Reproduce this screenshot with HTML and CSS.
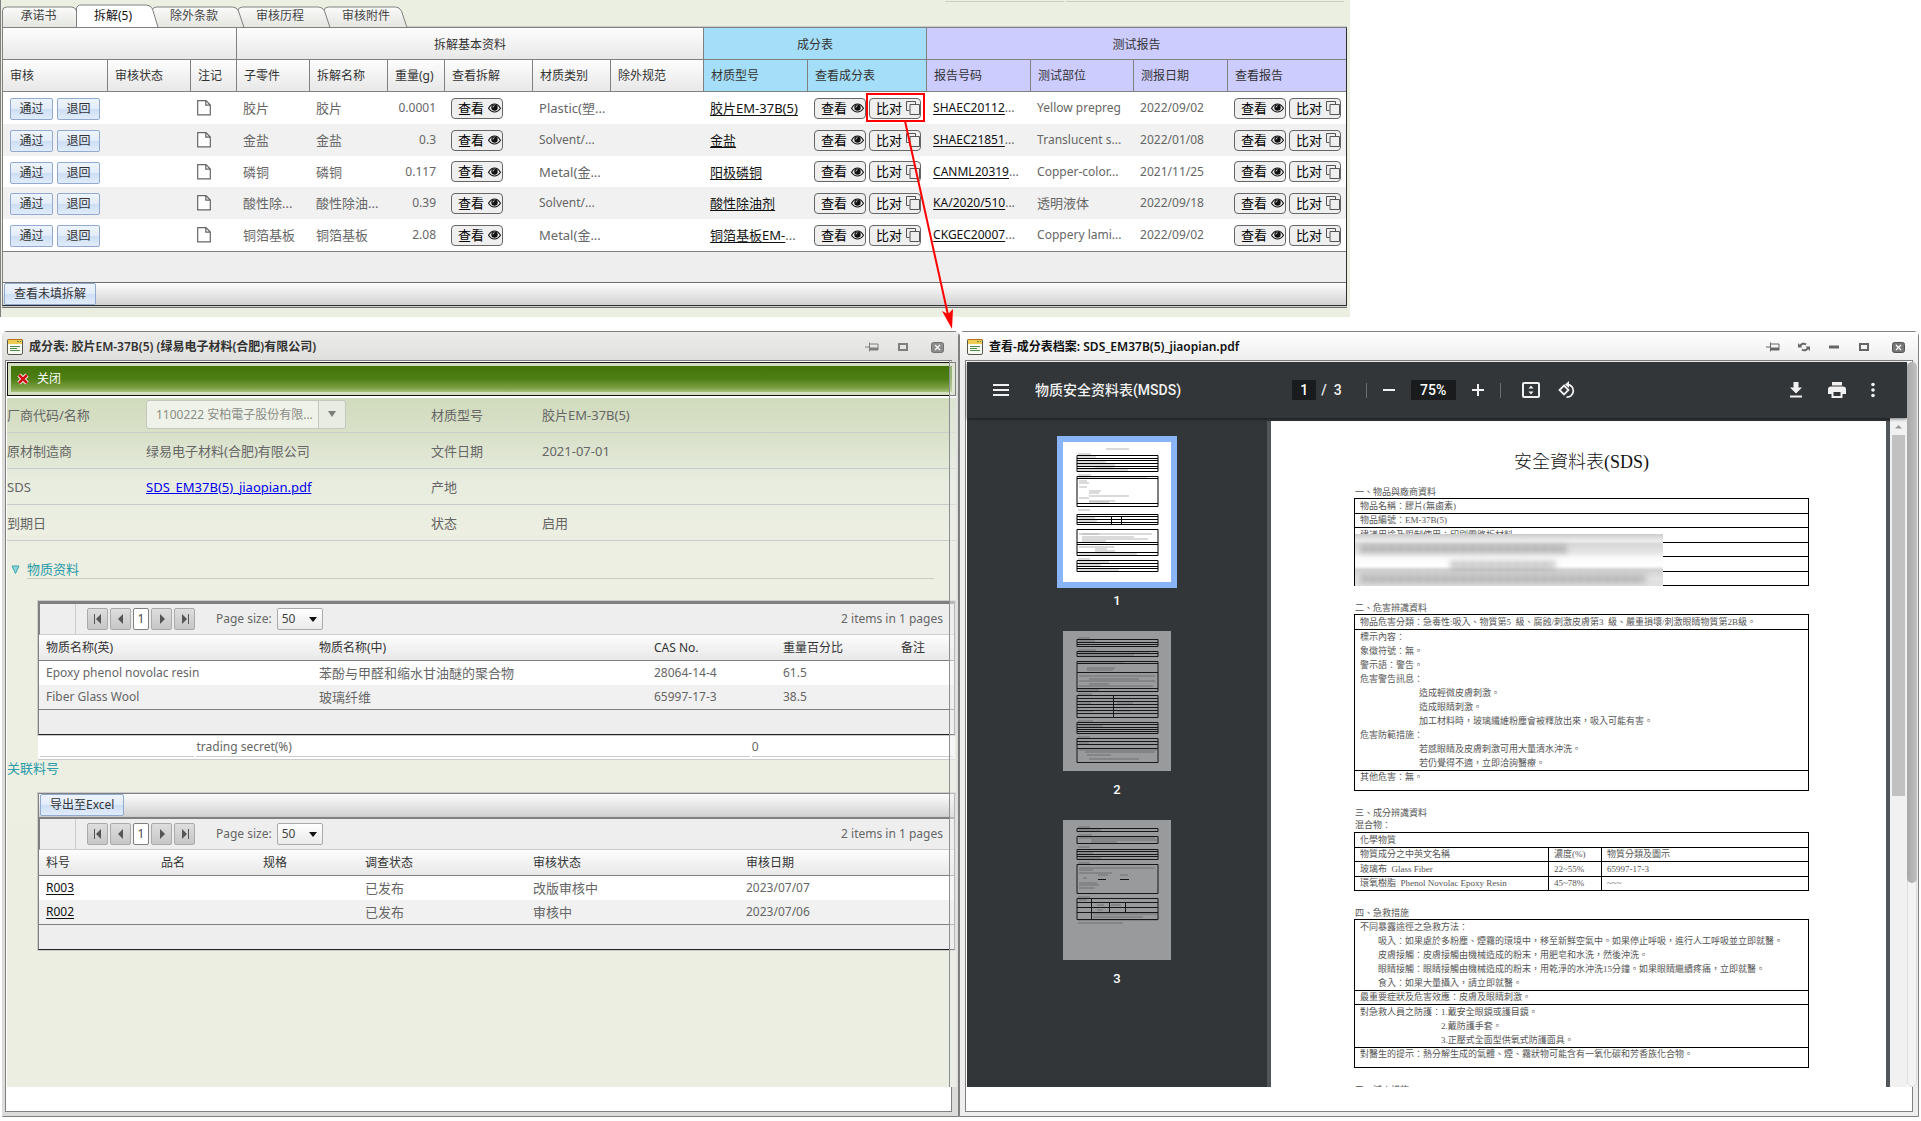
FILE: index.html
```html
<!DOCTYPE html>
<html lang="zh-CN">
<head>
<meta charset="utf-8">
<title>成分表审核</title>
<link rel="stylesheet" href="styles.css">
</head>
<body>
<svg class="defs" aria-hidden="true">
  <symbol id="i-eye" viewBox="0 0 13 10"><path d="M.5 5.2C2.5 2 4.300 1 6.500 1s4 1 6 4.200C10.500 8.200 8.700 9 6.500 9s-4-.8-6-3.800z" fill="none" stroke="#111" stroke-width="1.100"/><circle cx="6.500" cy="4.600" r="3.200" fill="#111"/><path d="M5 4.400A1.600 1.600 0 0 1 6.500 2.800" fill="none" stroke="#eee" stroke-width=".9"/></symbol>
  <symbol id="i-copy" viewBox="0 0 14 14"><path d="M9.500 3.500v-3h-9v9h3M4 3.500h9.500v10H4z" fill="none" stroke="#555"/></symbol>
  <symbol id="i-note" viewBox="0 0 14 16"><path d="M.7.7h8.300l4.300 4.300v9.800H.7zM8.800.9v4.300h4.300" fill="#fff" stroke="#666" stroke-width="1.200"/></symbol>
  <symbol id="i-app" viewBox="0 0 16 16"><rect x=".5" y=".5" width="15" height="15" rx="1.500" fill="#f6faf2" stroke="#55564d"/><path d="M1 1h14v4H1z" fill="#f0cb52"/><path d="M.5.5h15" stroke="#b86f1c"/><path d="M10 2.500h2M13 2.500h1M3 7.500h10M3 9.500h7M3 11.500h10" stroke="#4c8d45"/></symbol>
  <symbol id="i-pin" viewBox="0 0 14 10"><path d="M0 5h4M4.500.5v9M5 2h8v6H5" fill="none" stroke="#666"/><path d="M5 5.500h8V8H5z" fill="#666"/></symbol>
  <symbol id="i-max" viewBox="0 0 10 8"><rect x="1" y="1" width="8" height="6" fill="none" stroke="#666" stroke-width="2"/></symbol>
  <symbol id="i-min" viewBox="0 0 10 8"><path d="M0 4h10" stroke="#666" stroke-width="3"/></symbol>
  <symbol id="i-refresh" viewBox="0 0 12 10"><path d="M2 4.500C3 1.500 6 1 8 2.500M10 5.500C9 8.500 6 9 4 7.500" fill="none" stroke="#666" stroke-width="2"/><path d="M0 1v4.500h4.500zM12 9V4.500H7.500z" fill="#666"/></symbol>
  <symbol id="i-close" viewBox="0 0 13 11"><rect x=".5" y=".5" width="12" height="10" rx="2" fill="#777" stroke="#555"/><path d="M4 3l5 5M9 3L4 8" stroke="#fff" stroke-width="1.200"/></symbol>
  <symbol id="i-first" viewBox="0 0 8 10"><path d="M7 0v10L2 5z" fill="#555"/><path d="M.5 0v10" stroke="#555"/></symbol>
  <symbol id="i-prev" viewBox="0 0 8 10"><path d="M6 0v10L1 5z" fill="#555"/></symbol>
  <symbol id="i-next" viewBox="0 0 8 10"><path d="M2 0v10l5-5z" fill="#555"/></symbol>
  <symbol id="i-last" viewBox="0 0 8 10"><path d="M1 0v10l5-5z" fill="#555"/><path d="M7.500 0v10" stroke="#555"/></symbol>
</svg>

<section class="top">
  <div class="panel">
    <div class="rules"><i></i><i></i></div>
    <nav class="tabs">
      <svg class="tab-shapes" width="410" height="25" viewBox="0 0 410 25" aria-hidden="true">
        <defs><linearGradient id="tg" x1="0" y1="0" x2="0" y2="1"><stop offset="0" stop-color="#fbfbfb"/><stop offset="1" stop-color="#e2e4de"/></linearGradient></defs>
        <g fill="url(#tg)" stroke="#808080">
          <path d="M321.500 9q1-4 5-4h67q4 0 6 4l6 18H328z"/>
          <path d="M235.500 9q1-4 5-4h76q4 0 6 4l6 18H242z"/>
          <path d="M149.500 9q1-4 5-4h76q4 0 6 4l6 18H156z"/>
          <path d="M.5 27V9q0-4 4-4h65q4 0 5 4v18z"/>
          <path d="M74.500 27V7q0-4 5-4h65q4 0 6 4l6 20z" fill="#fff"/>
        </g>
      </svg>
      <a href="#" class="w1">承诺书</a><a href="#" class="w2 on">拆解(5)</a><a href="#" class="w3">除外条款</a><a href="#" class="w3">审核历程</a><a href="#" class="w3">审核附件</a>
    </nav>
    <div class="grid">
      <table class="parts">
        <colgroup><col class="c105"><col class="c83"><col class="c46"><col class="c73"><col class="c78"><col class="c57"><col class="c88"><col class="c78"><col class="c93"><col class="c104"><col class="c119"><col class="c104"><col class="c103"><col class="c94"><col class="c118"></colgroup>
        <thead>
          <tr class="group"><th colspan="3"></th><th colspan="6">拆解基本资料</th><th colspan="2" class="blue">成分表</th><th colspan="4" class="violet">测试报告</th></tr>
          <tr><th>审核</th><th>审核状态</th><th>注记</th><th>子零件</th><th>拆解名称</th><th>重量(g)</th><th>查看拆解</th><th>材质类别</th><th>除外规范</th><th class="blue">材质型号</th><th class="blue">查看成分表</th><th class="violet">报告号码</th><th class="violet">测试部位</th><th class="violet">测报日期</th><th class="violet">查看报告</th></tr>
        </thead>
        <tbody>
          <tr><td><div class="acts"><button class="blue-btn">通过</button><button class="blue-btn">退回</button></div></td><td></td><td><svg class="note"><use href="#i-note"/></svg></td><td>胶片</td><td>胶片</td><td class="num">0.0001</td><td><div class="btns"><button class="act">查看<svg class="eye"><use href="#i-eye"/></svg></button></div></td><td>Plastic(塑...</td><td></td><td><a href="#">胶片EM-37B(5)</a></td>
            <td class="over"><div class="btns"><button class="act">查看<svg class="eye"><use href="#i-eye"/></svg></button><span class="marked"><button class="act">比对<svg class="copy"><use href="#i-copy"/></svg></button><svg class="arrow" width="60" height="212" viewBox="0 0 60 212" aria-hidden="true"><path d="M4 0l43 194" stroke="#f00" stroke-width="2"/><path d="M51 208L41 190l6 3 5-5z" fill="#f00"/></svg></span></div></td>
            <td class="lat"><a href="#">SHAEC20112</a>...</td><td class="lat">Yellow prepreg</td><td class="lat">2022/09/02</td><td><div class="btns"><button class="act">查看<svg class="eye"><use href="#i-eye"/></svg></button><button class="act">比对<svg class="copy"><use href="#i-copy"/></svg></button></div></td></tr>
          <tr><td><div class="acts"><button class="blue-btn">通过</button><button class="blue-btn">退回</button></div></td><td></td><td><svg class="note"><use href="#i-note"/></svg></td><td>金盐</td><td>金盐</td><td class="num">0.3</td><td><div class="btns"><button class="act">查看<svg class="eye"><use href="#i-eye"/></svg></button></div></td><td class="lat">Solvent/...</td><td></td><td><a href="#">金盐</a></td>
            <td><div class="btns"><button class="act">查看<svg class="eye"><use href="#i-eye"/></svg></button><button class="act">比对<svg class="copy"><use href="#i-copy"/></svg></button></div></td>
            <td class="lat"><a href="#">SHAEC21851</a>...</td><td class="lat">Translucent s...</td><td class="lat">2022/01/08</td><td><div class="btns"><button class="act">查看<svg class="eye"><use href="#i-eye"/></svg></button><button class="act">比对<svg class="copy"><use href="#i-copy"/></svg></button></div></td></tr>
          <tr><td><div class="acts"><button class="blue-btn">通过</button><button class="blue-btn">退回</button></div></td><td></td><td><svg class="note"><use href="#i-note"/></svg></td><td>磷铜</td><td>磷铜</td><td class="num">0.117</td><td><div class="btns"><button class="act">查看<svg class="eye"><use href="#i-eye"/></svg></button></div></td><td>Metal(金...</td><td></td><td><a href="#">阳极磷铜</a></td>
            <td><div class="btns"><button class="act">查看<svg class="eye"><use href="#i-eye"/></svg></button><button class="act">比对<svg class="copy"><use href="#i-copy"/></svg></button></div></td>
            <td class="lat"><a href="#">CANML20319</a>...</td><td class="lat">Copper-color...</td><td class="lat">2021/11/25</td><td><div class="btns"><button class="act">查看<svg class="eye"><use href="#i-eye"/></svg></button><button class="act">比对<svg class="copy"><use href="#i-copy"/></svg></button></div></td></tr>
          <tr><td><div class="acts"><button class="blue-btn">通过</button><button class="blue-btn">退回</button></div></td><td></td><td><svg class="note"><use href="#i-note"/></svg></td><td>酸性除...</td><td>酸性除油...</td><td class="num">0.39</td><td><div class="btns"><button class="act">查看<svg class="eye"><use href="#i-eye"/></svg></button></div></td><td class="lat">Solvent/...</td><td></td><td><a href="#">酸性除油剂</a></td>
            <td><div class="btns"><button class="act">查看<svg class="eye"><use href="#i-eye"/></svg></button><button class="act">比对<svg class="copy"><use href="#i-copy"/></svg></button></div></td>
            <td class="lat"><a href="#">KA/2020/510</a>...</td><td>透明液体</td><td class="lat">2022/09/18</td><td><div class="btns"><button class="act">查看<svg class="eye"><use href="#i-eye"/></svg></button><button class="act">比对<svg class="copy"><use href="#i-copy"/></svg></button></div></td></tr>
          <tr><td><div class="acts"><button class="blue-btn">通过</button><button class="blue-btn">退回</button></div></td><td></td><td><svg class="note"><use href="#i-note"/></svg></td><td>铜箔基板</td><td>铜箔基板</td><td class="num">2.08</td><td><div class="btns"><button class="act">查看<svg class="eye"><use href="#i-eye"/></svg></button></div></td><td>Metal(金...</td><td></td><td><a href="#">铜箔基板EM-</a>...</td>
            <td><div class="btns"><button class="act">查看<svg class="eye"><use href="#i-eye"/></svg></button><button class="act">比对<svg class="copy"><use href="#i-copy"/></svg></button></div></td>
            <td class="lat"><a href="#">CKGEC20007</a>...</td><td class="lat">Coppery lami...</td><td class="lat">2022/09/02</td><td><div class="btns"><button class="act">查看<svg class="eye"><use href="#i-eye"/></svg></button><button class="act">比对<svg class="copy"><use href="#i-copy"/></svg></button></div></td></tr>
        </tbody>
      </table>
      <div class="foot"></div>
      <div class="bar"><button class="blue-btn">查看未填拆解</button></div>
    </div>
  </div>
</section>

<main class="windows">
  <section class="win win-a">
    <header class="title"><svg class="app"><use href="#i-app"/></svg><h2>成分表: 胶片EM-37B(5) (绿易电子材料(合肥)有限公司)</h2>
      <div class="ctl"><button aria-label="固定"><svg width="14" height="10"><use href="#i-pin"/></svg></button><button aria-label="最大化"><svg width="10" height="8"><use href="#i-max"/></svg></button><button aria-label="关闭窗口"><svg width="13" height="11"><use href="#i-close"/></svg></button></div>
    </header>
    <div class="frame">
      <div class="sheet">
        <div class="greenbar"><button><svg width="12" height="12" viewBox="0 0 12 12"><path d="M2 2l8 8M10 2l-8 8" stroke="#fff" stroke-width="4.500"/><path d="M2 2l8 8M10 2l-8 8" stroke="#d01010" stroke-width="2.500"/></svg>关闭</button></div>
        <div class="form">
          <label for="vendor">厂商代码/名称</label><span class="combo"><select id="vendor" disabled><option>1100222 安柏電子股份有限...</option></select></span><span>材质型号</span><span>胶片EM-37B(5)</span>
          <span>原材制造商</span><span>绿易电子材料(合肥)有限公司</span><span>文件日期</span><span>2021-07-01</span>
          <span>SDS</span><span><a href="#">SDS_EM37B(5)_jiaopian.pdf</a></span><span>产地</span><span></span>
          <span>到期日</span><span></span><span>状态</span><span>启用</span>
        </div>
        <h3 class="sect"><svg width="9" height="10" viewBox="0 0 9 10"><path d="M1 1h7L4.500 8.500z" fill="#8fd4dd" stroke="#3aa6b3"/></svg><span>物质资料</span></h3>
        <div class="box">
          <div class="pager"><i></i><button aria-label="首页"><svg><use href="#i-first"/></svg></button><button aria-label="上一页"><svg><use href="#i-prev"/></svg></button><button class="cur">1</button><button aria-label="下一页"><svg><use href="#i-next"/></svg></button><button aria-label="末页"><svg><use href="#i-last"/></svg></button><label for="ps1">Page size:</label><span class="size"><select id="ps1"><option>50</option></select></span><span class="total">2 items in 1 pages</span></div>
          <table class="list">
            <colgroup><col class="a1"><col class="a2"><col class="a3"><col class="a4"><col class="a5"></colgroup>
            <thead><tr><th>物质名称(英)</th><th>物质名称(中)</th><th>CAS No.</th><th>重量百分比</th><th>备注</th></tr></thead>
            <tbody><tr><td class="lat">Epoxy phenol novolac resin</td><td>苯酚与甲醛和缩水甘油醚的聚合物</td><td class="lat">28064-14-4</td><td class="lat">61.5</td><td></td></tr>
            <tr><td class="lat">Fiber Glass Wool</td><td>玻璃纤维</td><td class="lat">65997-17-3</td><td class="lat">38.5</td><td></td></tr></tbody>
          </table>
          <div class="lfoot"></div>
        </div>
        <div class="secret"><span></span><span>trading secret(%)</span><span>0</span></div>
        <h3 class="rel">关联料号</h3>
        <div class="box thin">
          <div class="bar"><button class="blue-btn">导出至Excel</button></div>
          <div class="pager line"><i></i><button aria-label="首页"><svg><use href="#i-first"/></svg></button><button aria-label="上一页"><svg><use href="#i-prev"/></svg></button><button class="cur">1</button><button aria-label="下一页"><svg><use href="#i-next"/></svg></button><button aria-label="末页"><svg><use href="#i-last"/></svg></button><label for="ps2">Page size:</label><span class="size"><select id="ps2"><option>50</option></select></span><span class="total">2 items in 1 pages</span></div>
          <table class="list">
            <colgroup><col class="b1"><col class="b2"><col class="b2"><col class="b3"><col class="b4"><col class="b5"></colgroup>
            <thead><tr><th>料号</th><th>品名</th><th>规格</th><th>调查状态</th><th>审核状态</th><th>审核日期</th></tr></thead>
            <tbody><tr><td class="lat"><a href="#">R003</a></td><td></td><td></td><td>已发布</td><td>改版审核中</td><td class="lat">2023/07/07</td></tr>
            <tr><td class="lat"><a href="#">R002</a></td><td></td><td></td><td>已发布</td><td>审核中</td><td class="lat">2023/07/06</td></tr></tbody>
          </table>
          <div class="lfoot"></div>
        </div>
      </div>
    </div>
  </section>

  <section class="win win-b">
    <header class="title"><svg class="app"><use href="#i-app"/></svg><h2>查看-成分表档案: SDS_EM37B(5)_jiaopian.pdf</h2>
      <div class="ctl"><button aria-label="固定"><svg width="14" height="10"><use href="#i-pin"/></svg></button><button aria-label="刷新"><svg width="12" height="10"><use href="#i-refresh"/></svg></button><button aria-label="最小化"><svg width="10" height="8"><use href="#i-min"/></svg></button><button aria-label="最大化"><svg width="10" height="8"><use href="#i-max"/></svg></button><button aria-label="关闭窗口"><svg width="13" height="11"><use href="#i-close"/></svg></button></div>
    </header>
    <div class="frame">
      <div class="viewer">
        <div class="pdfbar">
          <div class="left"><button aria-label="菜单"><svg width="16" height="12" viewBox="0 0 16 12"><path d="M0 1h16M0 6h16M0 11h16" stroke="#f1f1f1" stroke-width="2"/></svg></button><span>物质安全资料表(MSDS)</span></div>
          <div class="mid"><input type="text" value="1" aria-label="页码" class="pg"><span class="of">/&nbsp;&nbsp;3</span><i></i>
            <button aria-label="缩小"><svg width="12" height="12" viewBox="0 0 12 12"><path d="M0 6h12" stroke="#f1f1f1" stroke-width="2"/></svg></button><input type="text" value="75%" aria-label="缩放" class="zm"><button aria-label="放大"><svg width="12" height="12" viewBox="0 0 12 12"><path d="M0 6h12M6 0v12" stroke="#f1f1f1" stroke-width="2"/></svg></button><i class="near"></i>
            <button aria-label="适合页面" class="fit"><svg width="18" height="16" viewBox="0 0 18 16"><rect x="1" y="1" width="16" height="14" rx="1" fill="none" stroke="#f1f1f1" stroke-width="2"/><path d="M6.500 6.500h5L9 3.500zM6.500 9.500h5L9 12.500z" fill="#f1f1f1"/></svg></button>
            <button aria-label="旋转"><svg width="18" height="18" viewBox="0 0 18 18"><path d="M6 4.500L10.500 9 6 13.500 1.500 9z" fill="none" stroke="#f1f1f1" stroke-width="1.800"/><path d="M9.500 3.500a6.300 6.300 0 1 1-1 12.600" fill="none" stroke="#f1f1f1" stroke-width="1.800"/><path d="M11 0v7L7 3.500z" fill="#f1f1f1"/></svg></button></div>
          <div class="right"><button aria-label="下载"><svg width="14" height="16" viewBox="0 0 14 16"><path d="M4.500 0h5v5.500H13l-6 6-6-6h3.500zM1 13.500h12v2H1z" fill="#f1f1f1"/></svg></button><button aria-label="打印"><svg width="18" height="16" viewBox="0 0 18 16"><path d="M4 0h10v3.500H4zM3 4.500h12q3 0 3 3V12h-3.500v4h-11v-4H0V7.500q0-3 3-3zM5.500 10v4h7v-4z" fill="#f1f1f1" fill-rule="evenodd"/></svg></button><button aria-label="更多"><svg width="4" height="16" viewBox="0 0 4 16"><g fill="#f1f1f1"><circle cx="2" cy="2.500" r="1.800"/><circle cx="2" cy="8" r="1.800"/><circle cx="2" cy="13.500" r="1.800"/></g></svg></button></div>
        </div>
        <div class="pdfbody">
          <aside class="thumbs">
            <figure class="sel"><svg width="108" height="140" viewBox="0 0 108 140"><path fill="#fff" d="M0 0h108v140H0z"/><path d="M43 7h23M15 12h13M15 15h18M15 20h28M15 23h37M31 25h20M15 28h50M15 33h13M16 35h68M16 39h8M16 41h10M16 45h8M26 49h12M26 51h10M26 54h40M16 56h10M26 59h26M26 60h20M15 68h12M16 76h16M16 79h18M16 92h20M19 92h70M19 95h52M19 97h66M19 99h24M16 105h35M32 107h12M32 109h20M16 112h58M15 117h12M16 120h30M16 123h22M16 128h40" stroke="#b5b5b5" stroke-width="1"/><path d="M14 13.500h81v16H14zM14 16.500h81M14 18.500h81M14 21.500h81M14 24.500h81M14 26.500h81M14 34.500h81v30H14zM14 36.500h81M14 61.500h81M14 72.500h81v10H14zM14 74.500h81M14 77.500h81M14 80.500h81M48.500 75v8M58.500 75v8M14 87.500h81v26H14zM14 100.500h81M14 102.500h81M14 110.500h81M14 118.500h81v11H14zM14 121.500h81M14 124.500h81M14 126.500h81" fill="none" stroke="#000"/></svg><figcaption>1</figcaption></figure>
            <figure><svg width="108" height="140" viewBox="0 0 108 140"><path fill="#999a9c" d="M0 0h108v140H0z"/><path d="M15 7h12M16 10h16M15 19h18M16 21h70M16 24h55M16 31h45M24 37h28M24 39h26M16 45h76M26 48h50M16 50h76M26 53h20M16 55h74M16 59h20M15 63h14M16 72h12M54 72h16M16 80h14M54 80h14M15 90h15M16 95h24M15 106h12M16 112h10M16 119h78M22 121h70M24 124h24M26 128h50" stroke="#707173"/><path d="M14 8.500h81v7H14zM14 11.500h81M14 13.500h81M14 20.500h81v5H14zM14 22.500h81M14 30.500h81v30H14zM14 32.500h81M14 41.500h81M14 57.500h81M14 64.500h81v22H14zM14 67.500h81M14 70.500h81M14 73.500h81M14 76.500h81M14 79.500h81M14 82.500h81M50.500 64v22M14 91.500h81v11H14zM14 93.500h81M14 96.500h81M14 98.500h81M14 100.500h81M14 107.500h81v24H14zM14 110.500h81M14 113.500h81M14 117.500h81" fill="none" stroke="#151617"/></svg><figcaption>2</figcaption></figure>
            <figure><svg width="108" height="140" viewBox="0 0 108 140"><path fill="#999a9c" d="M0 0h108v140H0z"/><path d="M15 7h12M16 10h22M15 15h14M16 18h76M28 20h66M28 22h26M15 27h12M16 33h14M16 38h22M15 43h12M16 48h76M16 50h14M16 53h33M35 55h10M57 55h8M20 58h4M16 63h18M16 65h20M16 68h16M15 77h12M16 80h8M34 85h7M48 85h10M34 90h6M30 94h64M30 97h50M15 100h80M15 103h45" stroke="#707173"/><path d="M14 8.500h81v3H14zM14 16.500h81v7H14zM14 29.500h81v10H14zM14 31.500h81M14 34.500h81M14 36.500h81M14 44.500h81v29H14zM14 78.500h81v21H14zM14 82.500h81M14 87.500h81M14 92.500h81M28.500 79v20M46.500 83v10M62.500 83v10M35 59.500h8M57 59.500h9" fill="none" stroke="#151617"/></svg><figcaption>3</figcaption></figure>
          </aside>
          <article class="doc" lang="zh-TW">
            <h1>安全資料表(SDS)</h1>
            <h4>一、物品與廠商資料</h4>
            <div class="hide-wrap">
            <table><tr><td>物品名稱：膠片(無鹵素)</td></tr><tr><td>物品編號：EM-37B(5)</td></tr><tr><td>建議用途及限制使用：印刷電路板材料</td></tr><tr><td></td></tr><tr><td></td></tr><tr><td></td></tr></table>
            <div class="mask"><svg viewBox="0 0 308 52" width="308" height="52" aria-hidden="true"><g fill="none" stroke="#777" stroke-width="7" stroke-dasharray="7 2"><path d="M6 15h206M96 31h104M6 45h284"/></g></svg></div>
            </div>
            <h4>二、危害辨識資料</h4>
            <table><tr><td>物品危害分類：急毒性:吸入、物質第5&nbsp; 級、腐蝕/刺激皮膚第3&nbsp; 級、嚴重損壞/刺激眼睛物質第2B級。</td></tr>
            <tr><td><p>標示內容：</p><p>象徵符號：無。</p><p>警示語：警告。</p><p>危害警告訊息：</p><p class="in3">造成輕微皮膚刺激。</p><p class="in3">造成眼睛刺激。</p><p class="in3">加工材料時，玻璃纖維粉塵會被釋放出來，吸入可能有害。</p><p>危害防範措施：</p><p class="in3">若感眼睛及皮膚刺激可用大量清水沖洗。</p><p class="in3">若仍覺得不適，立即洽詢醫療。</p></td></tr>
            <tr class="tall"><td>其他危害：無。</td></tr></table>
            <h4>三、成分辨識資料</h4>
            <p class="mix">混合物：</p>
            <table><colgroup><col class="d1"><col class="d2"><col></colgroup><tr><td colspan="3">化學物質</td></tr><tr><td>物質成分之中英文名稱</td><td>濃度(%)</td><td>物質分類及圖示</td></tr><tr><td>玻璃布&nbsp; Glass Fiber</td><td>22~55%</td><td>65997-17-3</td></tr><tr><td>環氧樹脂&nbsp; Phenol Novolac Epoxy Resin</td><td>45~78%</td><td>~~~</td></tr></table>
            <h4>四、急救措施</h4>
            <table><tr><td><p>不同暴露途徑之急救方法：</p><p class="in1">吸入：如果處於多粉塵、煙霧的環境中，移至新鮮空氣中。如果停止呼吸，進行人工呼吸並立即就醫。</p><p class="in1">皮膚接觸：皮膚接觸由機械造成的粉末，用肥皂和水洗，然後沖洗。</p><p class="in1">眼睛接觸：眼睛接觸由機械造成的粉末，用乾淨的水沖洗15分鐘。如果眼睛繼續疼痛，立即就醫。</p><p class="in1">食入：如果大量攝入，請立即就醫。</p></td></tr>
            <tr><td>最重要症狀及危害效應：皮膚及眼睛刺激。</td></tr>
            <tr><td><p>對急救人員之防護：1.戴安全眼鏡或護目鏡。</p><p class="in4">2.戴防護手套。</p><p class="in4">3.正壓式全面型供氧式防護面具。</p></td></tr>
            <tr class="tall"><td>對醫生的提示：熱分解生成的氣體、煙、霧狀物可能含有一氧化碳和芳香族化合物。</td></tr></table>
            <h4>五、滅火措施</h4>
          </article>
          <div class="vscroll"><svg width="17" height="17" viewBox="0 0 17 17"><path d="M5 10.500h7L8.500 7z" fill="#999"/></svg><i></i></div>
        </div>
      </div>
      <div class="oscroll"><i></i></div>
    </div>
  </section>
</main>
</body>
</html>
```
FILE: styles.css
```css
* { box-sizing: border-box; }
body {
  margin: 0;
  height: 100vh;
  display: flex;
  flex-direction: column;
  background: #fff;
  color: #666;
  font: 13px/18px "Noto Sans", "Noto Sans CJK SC", sans-serif;
  overflow: hidden;
}
h1, h2, h3, h4, p, figure { margin: 0; font-weight: inherit; }
button, select, input { font: inherit; margin: 0; padding: 0; }
button { cursor: pointer; }
.defs { position: absolute; width: 0; height: 0; }

/* upper panel */
.top { display: grid; grid-template-columns: 1350fr 571fr; }
.panel { background: #ebefe1; border-left: 1px solid #808080; padding: 1px 3px 11px 1px; }
.rules { display: flex; gap: 2px; justify-content: flex-end; padding-right: 3px; }
.rules i { height: 1px; background: #cbcdc6; width: 119px; }
.rules i + i { width: 278px; }
.tabs { position: relative; display: flex; height: 25px; padding-top: 2px; border-bottom: 1px solid #ccc; }
.tab-shapes { position: absolute; left: 0; top: 0; }
.tabs a { position: relative; font-size: 12px; line-height: 24px; height: 22px; color: #444; text-decoration: none; text-align: center; white-space: nowrap; }
.tabs a.on { color: #111; }
.w1 { width: 73px; }
.w2 { width: 76px; }
.w3 { width: 86px; }
.grid { border: 1px solid #808080; border-color: #808080 #303030 #303030 #808080; box-shadow: 0 1px #ccc, 0 2px #707070; }
.parts { width: 100%; table-layout: fixed; border-collapse: separate; border-spacing: 0; border-bottom: 1px solid #808080; }
.c46 { width: 46px; } .c57 { width: 57px; } .c73 { width: 73px; } .c78 { width: 78px; }
.c83 { width: 83px; } .c88 { width: 88px; } .c93 { width: 93px; } .c94 { width: 94px; }
.c103 { width: 103px; } .c104 { width: 104px; } .c105 { width: 105px; } .c118 { width: 118px; } .c119 { width: 119px; }
.parts th {
  height: 32px; padding: 0 0 0 7px; text-align: left; font-size: 12px; font-weight: 400; color: #333; white-space: nowrap;
  background: linear-gradient(#fdfdfd, #e8e8e8); border-right: 1px solid #808080; border-bottom: 1px solid #808080;
}
.parts th:last-child { border-right: 0; }
.parts .group th { text-align: center; padding: 2px 0 0; }
.parts th.blue { background: #a4def8; }
.parts th.violet { background: #ccccff; }
.parts td { height: 32px; padding: 0 0 0 6px; white-space: nowrap; overflow: hidden; }
.parts td.over { overflow: visible; }
.parts tbody tr:nth-child(even) { background: #f1f1f1; }
.parts tbody tr { background: #fff; }
.parts tbody tr:nth-child(3) td { height: 31px; }
.parts td.num { text-align: right; padding-right: 9px; font-size: 12px; }
.parts td.lat, .list td.lat { font-size: 12px; }
.parts a, .list a { color: #111; text-underline-offset: 2px; }
.acts { display: flex; gap: 4px; padding: 2px 0 0 1px; }
.blue-btn {
  height: 22px; padding: 0 9px; border: 1px solid #92aad0; border-radius: 2px; color: #333; font-size: 12px; line-height: 20px; white-space: nowrap;
  background: linear-gradient(#edf4fd, #e2ecfa 50%, #cddef4 50%, #e0ecfb);
}
.acts .blue-btn { width: 43px; padding: 0; }
.note { display: block; width: 14px; height: 16px; }
.btns { display: flex; gap: 3px; }
.act {
  width: 52px; height: 21px; display: flex; align-items: center; justify-content: space-between; padding: 0 0 0 6px;
  border: 1px solid #666; border-radius: 4px; background: #efefef; color: #000; line-height: 19px; white-space: nowrap;
}
.eye { width: 13px; height: 10px; margin-right: 1px; }
.copy { width: 14px; height: 14px; }
.marked { position: relative; }
.marked::before { content: ""; position: absolute; inset: -5px -4px -3px -3px; border: 2px solid #f00; }
.arrow { position: absolute; left: 32px; top: 23px; z-index: 5; pointer-events: none; }
.foot { height: 30px; background: #eee; }
.bar { display: flex; background: linear-gradient(#fdfdfd, #d2d2d2); padding-left: 1px; }
.grid .bar { border-top: 1px solid #707070; }

/* floating windows */
.windows { flex: 1; min-height: 0; display: grid; grid-template-columns: 957fr 960fr; padding: 14px 2px 4px 2px; }
.win { min-width: 0; min-height: 0; display: flex; flex-direction: column; border: 1px solid #808080; border-radius: 5px 5px 0 0; background: #eee; }
.win-a { border-left-color: #ddd; background: #dcdddb; padding: 0 6px 4px 2px; }
.win-b { padding: 0 5px 4px; }
.title { display: flex; align-items: center; gap: 6px; height: 28px; padding: 2px 8px 0 2px; }
.win-a .title { background: linear-gradient(#ececea, #dfe0dd); margin: 0 -6px 0 -2px; padding: 2px 14px 0 4px; }
.win-b .title { background: linear-gradient(#fff, #eee); margin: 0 -5px; padding: 2px 13px 0 7px; }
.title h2 { flex: 1; font-size: 12px; font-weight: 600; color: #333; white-space: nowrap; }
.win-b .title h2 { color: #111; }
.app { width: 16px; height: 16px; }
.ctl { display: flex; align-items: center; gap: 18px; }
.ctl button { border: 0; background: none; display: flex; justify-content: center; min-width: 12px; }
.ctl button:last-child { margin-left: 4px; }
.win-a .ctl { opacity: .8; }
.frame { flex: 1; min-height: 0; position: relative; display: flex; flex-direction: column; border: 1px solid #808080; background: #fff; padding: 1px 0 24px 1px; }
.win-a .frame::after { content: ""; position: absolute; top: 0; bottom: 24px; right: -6px; width: 7px; border-left: 1px solid #8a8f90; background: rgba(235, 238, 235, .5); }

/* composition sheet */
.sheet { flex: 1; min-height: 0; margin-right: -5px; background: linear-gradient(#d1dbbd 36px, #dbe2cc 80px, #e8eddf 120px, #edefe2 190px, #ebeee1 100%); }
.greenbar { border: 1px solid #111; padding: 3px; height: 34px; background: #d3dec0; box-shadow: 0 2px #fff; }
.greenbar button { width: 100%; height: 26px; border: 0; padding-left: 6px; display: flex; align-items: center; gap: 8px; color: #fff; font-size: 12px; background: linear-gradient(#43740a, #4d7f14 50%, #7da046 85%, #a8c37c); }
.form { display: grid; grid-template-columns: 139px 285px 111px 1fr; margin-top: 1px; }
.form > * { height: 36px; display: flex; align-items: center; border-bottom: 1px solid #c9cbca; white-space: nowrap; }
.form a { color: #00e; }
.combo { position: relative; }
.combo select { width: 200px; height: 29px; appearance: none; border: 1px solid #c3c7bd; border-radius: 3px; padding-left: 9px; background: linear-gradient(90deg, #eff2e8 171px, #c3c7bd 171px, #c3c7bd 172px, #e9ece3 172px); color: #8a8d86; font-size: 12px; opacity: 1; }
.combo::after { content: ""; position: absolute; left: 182px; top: 14px; border: 4px solid transparent; border-top: 6px solid #7c7f79; border-bottom: 0; }
.sect { display: flex; align-items: center; gap: 7px; padding: 19px 22px 0 4px; font-size: 13px; color: #2a9ba8; }
.sect span { flex: 1; line-height: 18px; border-bottom: 1px solid #c8cbc6; }
.box { margin: 22px 1px 0 31px; border: 1px solid #808080; border-top-width: 3px; border-bottom-color: #222; background: #eee; box-shadow: 0 0 0 1px #ccc; }
.thin { margin-top: 17px; border-top-width: 1px; }
.pager { display: flex; align-items: center; gap: 2px; height: 31px; padding-right: 11px; background: #eee; border-bottom: 1px solid #ccc; border-left: 1px solid #808080; font-size: 12px; }
.pager.line { border-top: 2px solid #808080; height: 33px; }
.pager i { width: 36px; align-self: stretch; border-right: 1px solid #ccc; margin-right: 9px; }
.pager button { width: 21px; height: 22px; display: flex; align-items: center; justify-content: center; border: 1px solid #aaa; border-radius: 2px; background: linear-gradient(#dedede, #c6c6c6); color: #444; }
.pager button svg { width: 8px; height: 10px; }
.pager .cur { width: 16px; background: #fff; border-color: #808080; }
.pager label { margin: 0 3px 0 19px; }
.size { position: relative; display: flex; }
.size select { width: 46px; height: 22px; appearance: none; border: 1px solid #aaa; border-radius: 2px; padding-left: 4px; background: linear-gradient(#fff, #eaeaea); color: #444; font-size: 12px; }
.size::after { content: ""; position: absolute; right: 6px; top: 9px; border: 4px solid transparent; border-top: 5px solid #111; border-bottom: 0; }
.total { margin-left: auto; }
.list { width: 100%; table-layout: fixed; border-collapse: separate; border-spacing: 0; }
.list th, .list td { padding: 0 0 0 7px; text-align: left; white-space: nowrap; font-weight: 400; }
.list th { height: 26px; padding-top: 1px; font-size: 12px; color: #333; background: linear-gradient(#fdfdfd, #e8e8e8); border-bottom: 1px solid #808080; }
.list td { height: 24px; background: #fff; }
.list tr:nth-child(even) td { background: #f1f1f1; }
.a1 { width: 273px; } .a2 { width: 335px; } .a3 { width: 129px; } .a4 { width: 118px; } .a5 { width: 60px; }
.b1 { width: 115px; } .b2 { width: 102px; } .b3 { width: 168px; } .b4 { width: 213px; } .b5 { width: 215px; }
.lfoot { height: 25px; border-top: 1px solid #808080; }
.secret { display: grid; grid-template-columns: 155fr 555fr 202fr; gap: 2px; margin: 1px 1px 0 31px; padding: 1px 2px 2px; background: #fff; border-bottom: 1px solid #ccc; font-size: 12px; }
.secret span { line-height: 19px; border-bottom: 1px solid #ccc; }
.rel { font-size: 13px; line-height: 16px; color: #2a9ba8; }
.box .bar { border-bottom: 1px solid #ccc; }

/* PDF viewer */
.viewer { flex: 1; min-height: 0; margin-right: 5px; display: flex; flex-direction: column; background: #323639; }
.pdfbar { position: relative; display: grid; grid-template-columns: 1fr auto 1fr; align-items: center; height: 56px; padding: 0 32px 0 26px; color: #f1f1f1; background: #323639; box-shadow: 0 1px 3px rgba(0, 0, 0, .5); font: 500 14px/20px Roboto, "Noto Sans CJK SC", sans-serif; }
.pdfbar > div { display: flex; align-items: center; white-space: nowrap; }
.pdfbar button { border: 0; background: none; display: flex; }
.pdfbar input { border: 0; background: #191b1c; color: #fff; height: 20px; text-align: center; }
.pdfbar .left { gap: 26px; }
.pdfbar .pg { width: 24px; }
.pdfbar .zm { width: 45px; margin: 0 16px; }
.of { margin-left: 5px; }
.mid i { width: 1px; height: 15px; background: #6b6e70; margin: 0 16px 0 24px; }
.mid .near { margin-left: 16px; }
.mid .fit { margin: 0 18px 0 5px; }
.pdfbar .right { justify-content: flex-end; gap: 25px; }
.pdfbody { flex: 1; min-height: 0; display: flex; overflow: hidden; }
.thumbs { width: 300px; flex: none; display: flex; flex-direction: column; align-items: center; gap: 20px; padding-top: 24px; }
.thumbs figure { display: flex; flex-direction: column; align-items: center; gap: 9px; color: #fff; font: 500 13px/20px Roboto, sans-serif; }
.thumbs svg { display: block; }
.thumbs .sel { gap: 3px; margin-top: -6px; }
.thumbs .sel svg { box-sizing: content-box; border: 6px solid #8ab4f8; }
.doc { flex: 1; min-width: 0; margin-top: 3px; border: solid #525659; border-width: 0 4px; background: #fff; padding: 0 77px 0 83px; color: #555; font: 9px/14px "Liberation Serif", "Noto Sans CJK TC", serif; white-space: nowrap; }
.doc h1 { font-size: 18px; line-height: 26px; text-align: center; padding: 28px 0 11px; color: #111; font-weight: 300; }
.doc h4 { font-size: 9px; line-height: 12px; padding: 16px 0 0 1px; }
.doc h1 + h4 { padding-top: 0; }
.mix { padding-left: 1px; line-height: 13px; }
.doc table { width: 100%; table-layout: fixed; border-collapse: collapse; font: inherit; color: inherit; }
.doc td { border: 1px solid #000; padding: 0 0 0 5px; line-height: 13px; height: 14px; overflow: hidden; }
.doc tr:nth-child(odd) td { height: 15px; }
.doc td p { line-height: 14px; }
.doc .tall td, .doc .tall:nth-child(odd) td { height: 20px; vertical-align: top; }
.d1 { width: 194px; } .d2 { width: 53px; }
.in1 { padding-left: 18px; } .in3 { padding-left: 59px; } .in4 { padding-left: 81px; }
.hide-wrap { position: relative; }
.mask { position: absolute; left: 1px; bottom: 0; width: 308px; height: 52px; overflow: hidden; background: linear-gradient(#ccc, #eee 7px, #d8d8d8 10px, #e4e4e4 18px, #fafafa 24px, #fff 32px, #d0d0d0 36px, #e2e2e2 44px, #e0e0e0); }
.mask svg { display: block; filter: blur(3px); opacity: .6; }
.vscroll { width: 17px; background: #f1f1f1; display: flex; flex-direction: column; align-items: center; }
.vscroll i { width: 13px; height: 54%; background: #c1c1c1; }
.oscroll { position: absolute; top: 1px; right: -5px; bottom: 24px; width: 10px; border-radius: 5px; background: #f3f3f3; border: 1px solid #ddd; }
.oscroll i { display: block; margin: -1px; height: 72%; border-radius: 5px; background: linear-gradient(90deg, #a8a8a8, #c0c0c0); }
```
